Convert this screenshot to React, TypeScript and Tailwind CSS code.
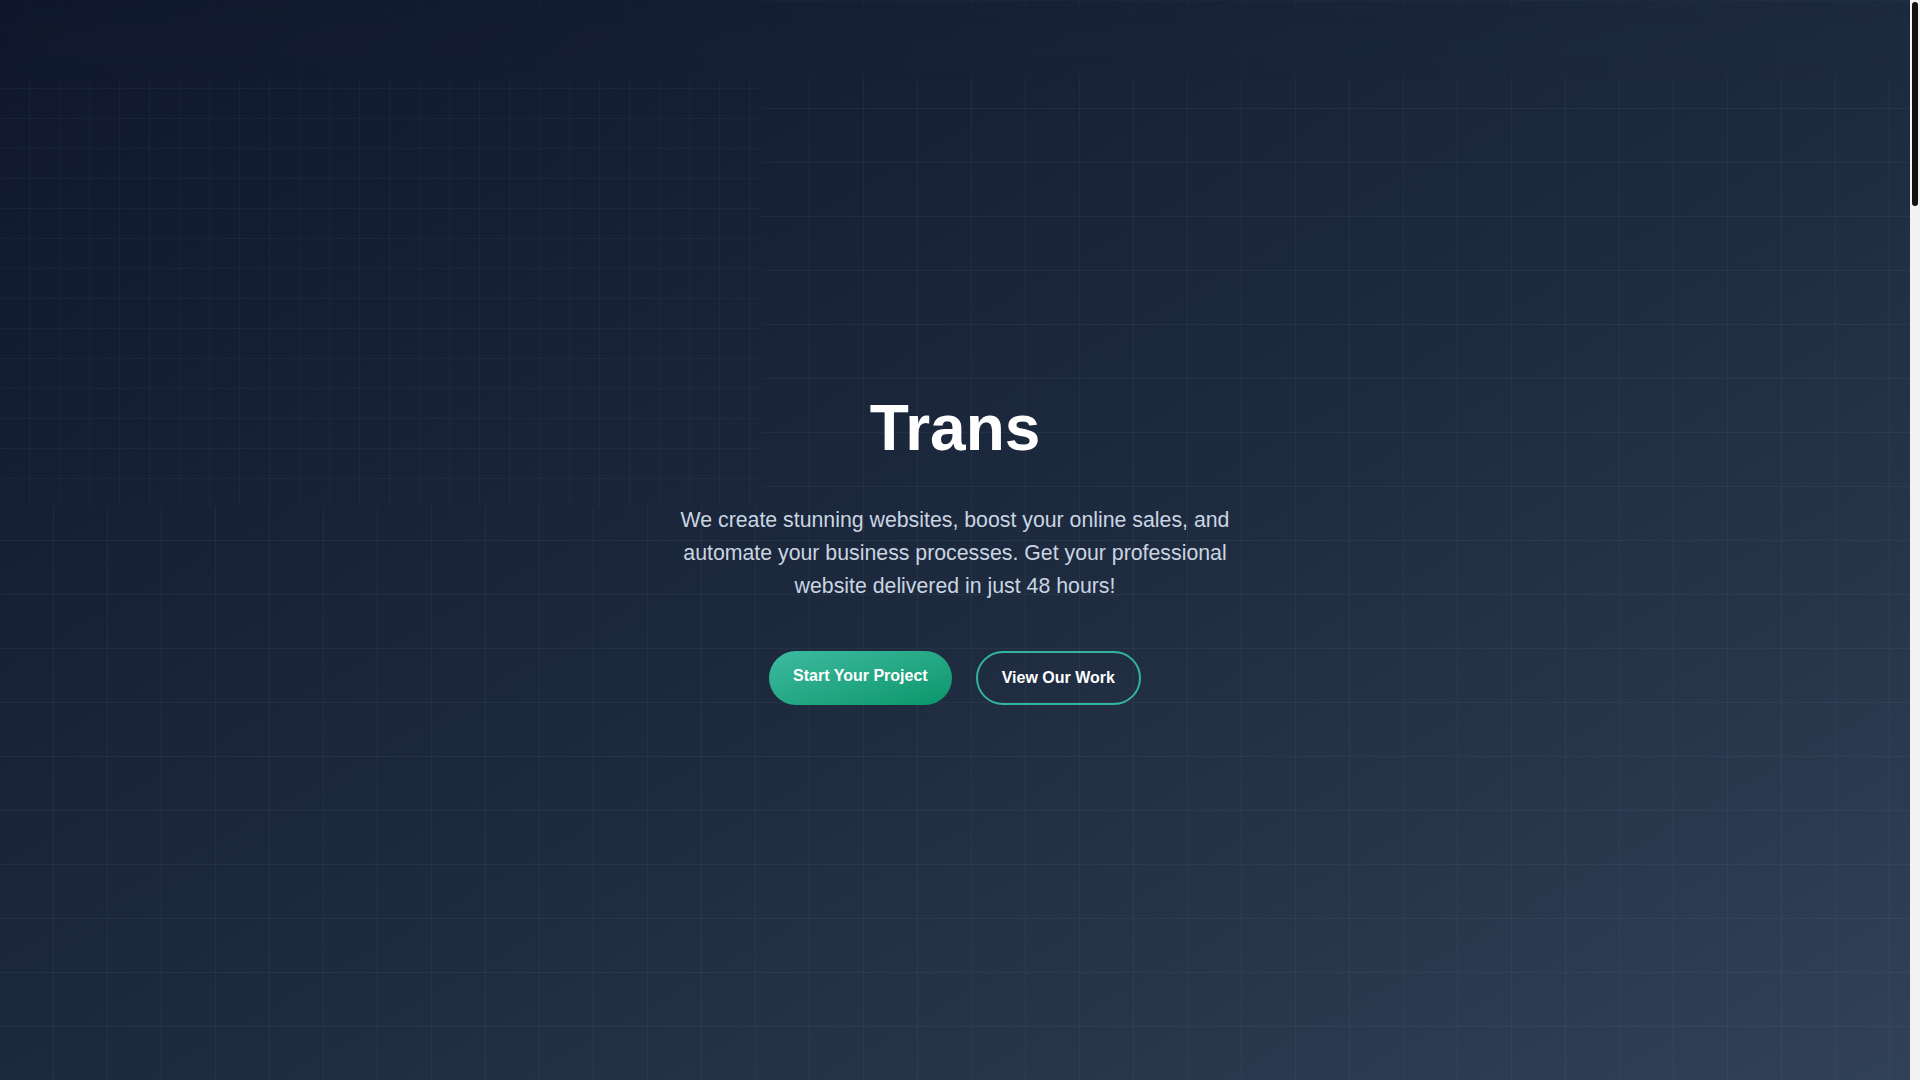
import React, { useEffect, useState } from 'react';

const font = "font-['Liberation_Sans',Arial,sans-serif]";

// custom scroll indicator on the right edge (light track, dark pill thumb)
function ScrollRail() {
  const [thumb, setThumb] = useState({ top: 0, height: 200 });

  useEffect(() => {
    const update = () => {
      const doc = document.documentElement;
      const track = window.innerHeight - 4;
      const ratio = window.innerHeight / doc.scrollHeight;
      const height = Math.max(24, track * ratio);
      const max = doc.scrollHeight - window.innerHeight;
      const top = max > 0 ? (window.scrollY / max) * (track - height) : 0;
      setThumb({ top, height });
    };
    update();
    window.addEventListener('scroll', update);
    window.addEventListener('resize', update);
    return () => {
      window.removeEventListener('scroll', update);
      window.removeEventListener('resize', update);
    };
  }, []);

  return (
    <div className="fixed bottom-0 right-0 top-0 z-[60] w-[10px] bg-[#f1f1f1] p-[2px]">
      <div className="w-full rounded-full bg-[#111]" style={{ height: thumb.height, marginTop: thumb.top }} />
    </div>
  );
}

function Hero() {
  return (
    <section className="relative h-screen overflow-hidden bg-fixed bg-linear-to-br from-slate-900 via-slate-800 to-slate-700">
      {/* base grid */}
      <div className="absolute inset-0 bg-[linear-gradient(to_right,rgba(148,163,184,0.07)_1px,transparent_1px),linear-gradient(to_bottom,rgba(148,163,184,0.07)_1px,transparent_1px)] bg-[size:54px_54px] bg-[position:-1px_0px]" />
      {/* finer grid tile, top left */}
      <div className="absolute left-0 top-0 h-[507px] w-[762px] bg-fixed bg-linear-to-br from-slate-900 via-slate-800 to-slate-700">
        <div className="h-full w-full bg-[linear-gradient(to_right,rgba(148,163,184,0.055)_1px,transparent_1px),linear-gradient(to_bottom,rgba(148,163,184,0.055)_1px,transparent_1px)] bg-[size:30px_30px] bg-[position:-1px_-2px]" />
      </div>

      <div className="relative z-10 flex h-full items-center justify-center px-6 pt-5">
        <div className="flex flex-col items-center text-center">
          <h1 className="mb-11 text-[64px] font-bold leading-none text-white">Trans</h1>
          <p className="mb-12 max-w-[600px] text-[21.3px] leading-[33px] text-slate-300">
            We create stunning websites, boost your online sales, and automate your business processes. Get your
            professional website delivered in just 48 hours!
          </p>
          <div className="flex gap-6">
            <a href="#contact" className="rounded-full bg-linear-to-br from-[#3bbba2] to-[#059669] px-6 py-[13px] text-base font-semibold leading-6 text-white">
              Start Your Project
            </a>
            <a href="#work" className="rounded-full border-2 border-[#33b59c] px-6 py-[13px] text-base font-semibold leading-6 text-white">
              View Our Work
            </a>
          </div>
        </div>
      </div>
    </section>
  );
}

export default function App() {
  return (
    <div className={`${font} bg-slate-900 pr-[10px]`}>
      <header className="fixed left-0 right-[10px] top-0 z-50 h-20 backdrop-blur-md" />

      <Hero />

      {/* sections further down the page */}
      <section id="services" className="min-h-screen bg-slate-900" />
      <section id="work" className="min-h-screen bg-slate-800" />
      <section id="process" className="min-h-screen bg-slate-900" />
      <section id="contact" className="min-h-screen bg-slate-800" />
      <footer className="h-[300px] bg-slate-900" />

      <ScrollRail />
    </div>
  );
}
